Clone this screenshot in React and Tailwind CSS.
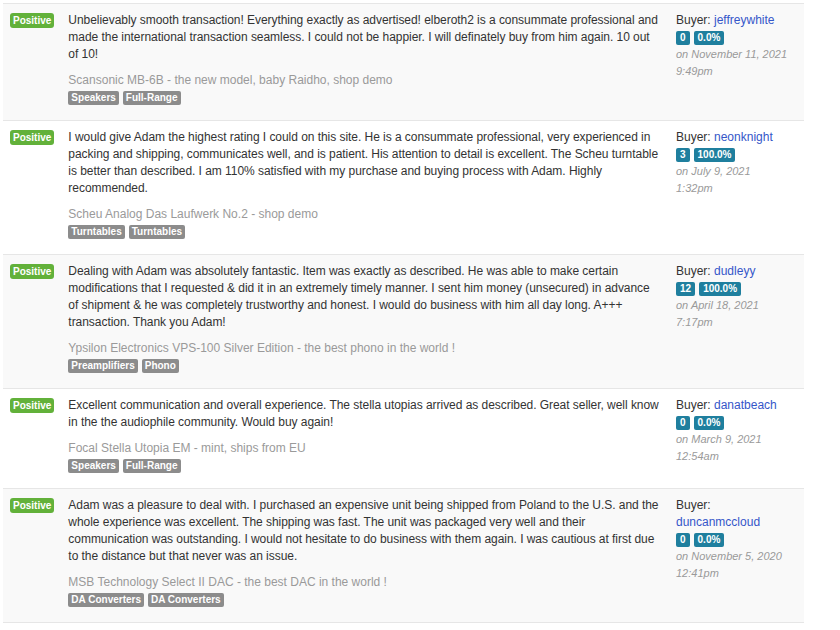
import React from "react";

// Feedback rows
const reviews = [
  {
    text: "Unbelievably smooth transaction! Everything exactly as advertised! elberoth2 is a consummate professional and made the international transaction seamless. I could not be happier. I will definately buy from him again. 10 out of 10!",
    product: "Scansonic MB-6B - the new model, baby Raidho, shop demo",
    tags: ["Speakers", "Full-Range"],
    buyer: "jeffreywhite",
    count: "0",
    pct: "0.0%",
    date: "on November 11, 2021",
    time: "9:49pm",
  },
  {
    text: "I would give Adam the highest rating I could on this site. He is a consummate professional, very experienced in packing and shipping, communicates well, and is patient. His attention to detail is excellent. The Scheu turntable is better than described. I am 110% satisfied with my purchase and buying process with Adam. Highly recommended.",
    product: "Scheu Analog Das Laufwerk No.2 - shop demo",
    tags: ["Turntables", "Turntables"],
    buyer: "neonknight",
    count: "3",
    pct: "100.0%",
    date: "on July 9, 2021",
    time: "1:32pm",
  },
  {
    text: "Dealing with Adam was absolutely fantastic. Item was exactly as described. He was able to make certain modifications that I requested & did it in an extremely timely manner. I sent him money (unsecured) in advance of shipment & he was completely trustworthy and honest. I would do business with him all day long. A+++ transaction. Thank you Adam!",
    product: "Ypsilon Electronics VPS-100 Silver Edition - the best phono in the world !",
    tags: ["Preamplifiers", "Phono"],
    buyer: "dudleyy",
    count: "12",
    pct: "100.0%",
    date: "on April 18, 2021",
    time: "7:17pm",
  },
  {
    text: "Excellent communication and overall experience. The stella utopias arrived as described. Great seller, well know in the the audiophile community. Would buy again!",
    product: "Focal Stella Utopia EM - mint, ships from EU",
    tags: ["Speakers", "Full-Range"],
    buyer: "danatbeach",
    count: "0",
    pct: "0.0%",
    date: "on March 9, 2021",
    time: "12:54am",
  },
  {
    text: "Adam was a pleasure to deal with. I purchased an expensive unit being shipped from Poland to the U.S. and the whole experience was excellent. The shipping was fast. The unit was packaged very well and their communication was outstanding. I would not hesitate to do business with them again. I was cautious at first due to the distance but that never was an issue.",
    product: "MSB Technology Select II DAC - the best DAC in the world !",
    tags: ["DA Converters", "DA Converters"],
    buyer: "duncanmccloud",
    count: "0",
    pct: "0.0%",
    date: "on November 5, 2020",
    time: "12:41pm",
  },
];

const App = () => {
  return (
    <div className="min-h-screen bg-white pt-[3px] pl-[3px] font-['Liberation_Sans',Arial,sans-serif] text-[#333]">
      <div className="w-[801px] border-b border-[#e6e6e6]">
        {reviews.map((r, i) => (
          <div
            key={i}
            className={`flex border-t border-[#e6e6e6] ${
              i % 2 === 0 ? "bg-[#f9f9f9]" : "bg-white"
            }`}
          >
            {/* Rating */}
            <div className="px-[7px] pt-[9px]">
              <span className="block h-[15px] rounded-[3px] bg-[#62b13a] px-[3px] text-[10px] font-bold leading-[15px] text-white">
                Positive
              </span>
            </div>

            {/* Comment */}
            <div className="flex-1 pl-[7px] pr-[6px] pt-2 pb-[15px]">
              <p className="text-[12px] leading-[17px] tracking-[-0.045px]">{r.text}</p>
              <div className="mt-2 text-[12px] leading-[18px] text-[#9a9a9a]">
                {r.product}
              </div>
              <div className="mt-[2px] flex gap-1">
                {r.tags.map((t, j) => (
                  <span
                    key={j}
                    className="h-[14px] rounded-[2px] bg-[#8c8c8c] px-[3px] text-[10px] font-bold leading-[14px] text-white"
                  >
                    {t}
                  </span>
                ))}
              </div>
            </div>

            {/* Buyer */}
            <div className="w-[136px] px-2 pt-2 text-[12px] leading-[17px]">
              <div>
                Buyer: <span className="text-[#3556c9]">{r.buyer}</span>
              </div>
              <div className="flex h-[17px] items-center gap-1">
                <span className="h-[14px] rounded-[2px] bg-[#1f7f9e] px-[4px] text-[10px] font-bold leading-[14px] text-white">
                  {r.count}
                </span>
                <span className="h-[14px] rounded-[2px] bg-[#1f7f9e] px-[4px] text-[10px] font-bold leading-[14px] text-white">
                  {r.pct}
                </span>
              </div>
              <div className="text-[11px] italic text-[#9a9a9a]">
                {r.date}
                <br />
                {r.time}
              </div>
            </div>
          </div>
        ))}
      </div>
    </div>
  );
};

export default App;
